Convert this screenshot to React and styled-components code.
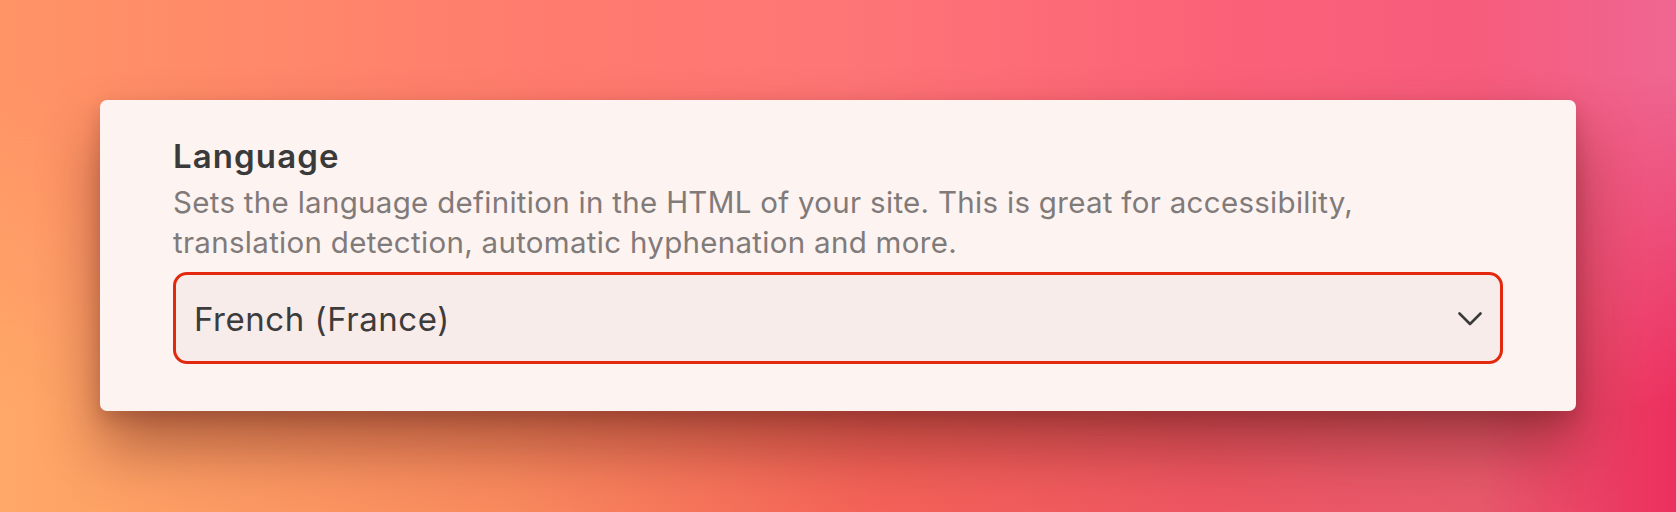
import React from "react";
import styled, { createGlobalStyle } from "styled-components";

const GlobalStyle = createGlobalStyle`
  html, body {
    margin: 0;
    padding: 0;
    height: 100%;
  }
  body {
    font-family: Inter, "Noto Sans", "Liberation Sans", sans-serif;
  }
  * { box-sizing: border-box; }
`;

// Gradient backdrop behind the settings card
const Backdrop = styled.main`
  position: relative;
  width: 1676px;
  height: 512px;
  padding: 100px 100px 0;
  background: linear-gradient(90deg, #ff9466 0%, #ff7b6e 33%, #fe7676 50%, #fb6278 72%, #f75c7c 88%, #ee6692 100%);
  overflow: hidden;

  /* warmer, redder lower half */
  &::before {
    content: "";
    position: absolute;
    inset: 0;
    background: linear-gradient(90deg, #ffa868 0%, #f98a5e 30%, #f46258 52%, #ee5662 72%, #e85a6c 88%, #ec2f5e 100%);
    -webkit-mask-image: linear-gradient(to bottom, transparent 15%, black 80%);
    mask-image: linear-gradient(to bottom, transparent 15%, black 80%);
  }
`;

const Card = styled.section`
  position: relative;
  z-index: 1;
  width: 1476px;
  height: 311px;
  padding: 37px 73px 0;
  background: #fdf3f1;
  border-radius: 7px;
  box-shadow: 0 36px 60px rgba(80, 20, 15, 0.45), 0 8px 18px rgba(80, 20, 15, 0.2);
  display: flex;
  flex-direction: column;
`;

const Title = styled.h2`
  margin: 0;
  font-size: 33px;
  line-height: 38px;
  font-weight: 600;
  color: #3b3a3a;
  letter-spacing: 1.1px;
`;

const Description = styled.p`
  margin: 7px 0 0;
  font-size: 29.5px;
  line-height: 40px;
  font-weight: 400;
  color: #807a79;
  letter-spacing: 0.3px;
  max-width: 1220px;
`;

const SelectBox = styled.div`
  margin-top: 10px;
  height: 92px;
  flex-shrink: 0;
  border: 3px solid #e2290f;
  border-radius: 14px;
  background: #f8ecea;
  padding: 1px 18px 0 18px;
  display: flex;
  align-items: center;
  justify-content: space-between;
  cursor: pointer;
`;

const SelectValue = styled.span`
  font-size: 33px;
  color: #3d3c3c;
  letter-spacing: 0.55px;
`;

const Chevron = () => (
  <svg width="24" height="14" viewBox="0 0 24 14" fill="none">
    <path d="M1.5 1.5 L12 12 L22.5 1.5" stroke="#3a3a3a" strokeWidth="2.6" strokeLinecap="round" strokeLinejoin="round" />
  </svg>
);

const App = () => {
  return (
    <Backdrop>
      <GlobalStyle />
      <Card>
        <Title>Language</Title>
        <Description>
          Sets the language definition in the HTML of your site. This is great for accessibility,
          translation detection, automatic hyphenation and more.
        </Description>
        <SelectBox role="combobox" aria-expanded="false">
          <SelectValue>French (France)</SelectValue>
          <Chevron />
        </SelectBox>
      </Card>
    </Backdrop>
  );
};

export default App;
